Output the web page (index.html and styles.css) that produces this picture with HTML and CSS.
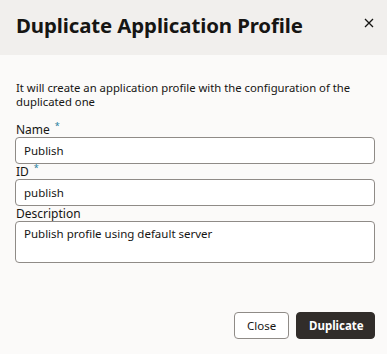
FILE: index.html
```html
<!DOCTYPE html>
<html>
<head>
<meta charset="utf-8">
<link rel="stylesheet" href="styles.css">
</head>
<body>
<div class="dialog">
  <div class="header">
    <h1 class="title">Duplicate Application Profile</h1>
    <button class="close-x" aria-label="Close">
      <svg width="10" height="10" viewBox="0 0 10 10"><path d="M1 1L9 9M9 1L1 9" stroke="#161513" stroke-width="1.3" fill="none"/></svg>
    </button>
  </div>
  <div class="body">
    <p class="intro">It will create an application profile with the configuration of the duplicated one</p>
    <div class="field">
      <label class="label">Name<span class="req">*</span></label>
      <div class="input">Publish</div>
    </div>
    <div class="field">
      <label class="label">ID<span class="req">*</span></label>
      <div class="input">publish</div>
    </div>
    <div class="field">
      <label class="label">Description</label>
      <div class="input textarea">Publish profile using default server</div>
    </div>
  </div>
  <div class="footer">
    <button class="btn btn-outline">Close</button>
    <button class="btn btn-primary">Duplicate</button>
  </div>
</div>
</body>
</html>
```
FILE: styles.css
```css
html, body {
  margin: 0;
  padding: 0;
  background: #fbfaf9;
}
body {
  font-family: "Noto Sans", "Open Sans", sans-serif;
  color: #161513;
  width: 387px;
  height: 354px;
  overflow: hidden;
}
.dialog {
  display: flex;
  flex-direction: column;
  height: 354px;
}
.header {
  height: 55px;
  background: #f1efed;
  display: flex;
  align-items: center;
  justify-content: space-between;
  padding: 0 10px 0 16px;
  box-sizing: border-box;
}
.title {
  margin: 0;
  font-size: 20.4px;
  font-weight: 700;
  letter-spacing: -0.1px;
  line-height: 1;
  padding-bottom: 4px;
}
.close-x {
  border: 0;
  background: transparent;
  width: 16px;
  height: 16px;
  padding: 0;
  display: flex;
  align-items: center;
  justify-content: center;
  margin-bottom: 10px;
}
.body {
  padding: 26px 12px 0 15px;
  flex: 1;
}
.intro {
  margin: 0 0 13px 1px;
  font-size: 11.3px;
  line-height: 14px;
  color: #161513;
}
.field {
  display: flex;
  flex-direction: column;
}
.label {
  font-size: 12px;
  line-height: 15px;
  height: 15px;
  margin-left: 1px;
}
.req {
  color: #227e9e;
  font-size: 9px;
  margin-left: 5px;
  position: relative;
  top: -5px;
}
.input {
  height: 27px;
  box-sizing: border-box;
  border: 1px solid #8f8b87;
  border-radius: 4px;
  background: #fff;
  font-size: 11.5px;
  line-height: 25px;
  padding: 0 8px;
}
.textarea {
  height: 42px;
  line-height: 15px;
  padding-top: 4px;
}
.footer {
  display: flex;
  justify-content: flex-end;
  gap: 7px;
  padding: 0 12px 15px 0;
}
.btn {
  height: 27px;
  border-radius: 4px;
  font-family: "Noto Sans", "Open Sans", sans-serif;
  font-size: 11.5px;
  padding: 0 12px;
  box-sizing: border-box;
}
.btn-outline {
  background: #fff;
  border: 1px solid #8f8b87;
  color: #161513;
  width: 55px;
}
.btn-primary {
  background: #312d2a;
  border: 1px solid #312d2a;
  color: #fff;
  font-weight: 700;
  width: 79px;
}
```
